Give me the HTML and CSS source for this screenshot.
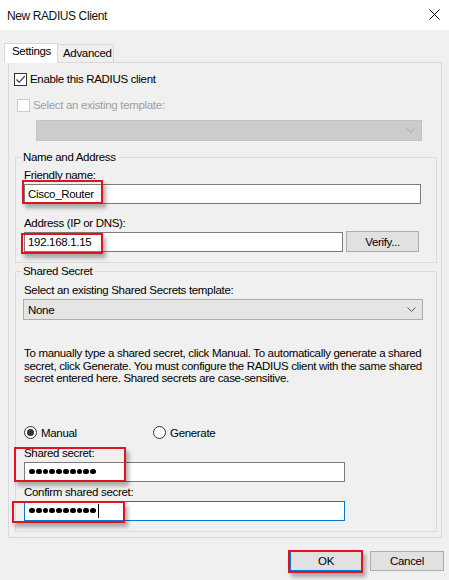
FILE: index.html
```html
<!DOCTYPE html>
<html>
<head>
<meta charset="utf-8">
<link rel="stylesheet" href="styles.css">
</head>
<body>
<div class="dialog">
  <div class="titlebar">
    <span class="title">New RADIUS Client</span>
    <svg class="close" width="11" height="11" viewBox="0 0 11 11"><path d="M0.5 0.5 L10.5 10.5 M10.5 0.5 L0.5 10.5" stroke="#000" stroke-width="1" fill="none"/></svg>
  </div>
  <div class="body">
    <div class="tabs">
      <div class="tab active">Settings</div>
      <div class="tab">Advanced</div>
    </div>
    <div class="panel">
      <div class="check-row enable">
        <span class="checkbox checked"><svg width="11" height="11" viewBox="0 0 11 11"><path d="M1.5 5.5 L4.2 8.3 L9.8 2.2" stroke="#222" stroke-width="1.1" fill="none"/></svg></span>
        <span>Enable this RADIUS client</span>
      </div>
      <div class="check-row template disabled">
        <span class="checkbox"></span>
        <span>Select an existing template:</span>
      </div>
      <div class="select disabled-select">
        <svg class="chev" width="9" height="5" viewBox="0 0 9 5"><path d="M0.5 0.5 L4.5 4.5 L8.5 0.5" stroke="#a6a6a6" fill="none"/></svg>
      </div>

      <div class="group group-name">
        <span class="legend">Name and Address</span>
        <label class="lbl first">Friendly name:</label>
        <div class="field-wrap">
          <div class="input friendly">Cisco_Router</div>
          <span class="mark mark-friendly"></span>
        </div>
        <label class="lbl addr-lbl">Address (IP or DNS):</label>
        <div class="addr-row">
          <div class="field-wrap">
            <div class="input address">192.168.1.15</div>
            <span class="mark mark-address"></span>
          </div>
          <div class="button verify">Verify...</div>
        </div>
      </div>

      <div class="group group-secret">
        <span class="legend">Shared Secret</span>
        <label class="lbl first2">Select an existing Shared Secrets template:</label>
        <div class="select none-select">
          <span>None</span>
          <svg class="chev" width="9" height="5" viewBox="0 0 9 5"><path d="M0.5 0.5 L4.5 4.5 L8.5 0.5" stroke="#555" fill="none"/></svg>
        </div>
        <p class="info">To manually type a shared secret, click Manual. To automatically generate a shared secret, click Generate. You must configure the RADIUS client with the same shared secret entered here. Shared secrets are case-sensitive.</p>
        <div class="radio-row">
          <div class="radio-item manual"><span class="radio checked"></span><span>Manual</span></div>
          <div class="radio-item"><span class="radio"></span><span>Generate</span></div>
        </div>
        <label class="lbl secret-lbl">Shared secret:</label>
        <div class="field-wrap">
          <div class="input secret"><span class="dots"><i></i><i></i><i></i><i></i><i></i><i></i><i></i><i></i><i></i><i></i></span></div>
          <span class="mark mark-secret"></span>
        </div>
        <label class="lbl confirm-lbl">Confirm shared secret:</label>
        <div class="field-wrap">
          <div class="input secret focused"><span class="dots"><i></i><i></i><i></i><i></i><i></i><i></i><i></i><i></i><i></i><i></i></span><span class="caret"></span></div>
          <span class="mark mark-confirm"></span>
        </div>
      </div>
    </div>
    <div class="footer">
      <div class="field-wrap">
        <div class="button ok">OK</div>
        <span class="mark mark-ok"></span>
      </div>
      <div class="button cancel">Cancel</div>
    </div>
  </div>
</div>
</body>
</html>
```

FILE: styles.css
```css
* { box-sizing: border-box; }
html, body { margin: 0; padding: 0; }
body {
  width: 449px;
  height: 580px;
  background: #f0f0f0;
  font-family: "Liberation Sans", Arial, sans-serif;
  font-size: 11.5px;
  letter-spacing: -0.32px;
  color: #000;
  overflow: hidden;
}
.dialog { width: 449px; height: 580px; display: flex; flex-direction: column; }
.titlebar {
  height: 30px;
  background: #fff;
  display: flex;
  align-items: center;
  justify-content: space-between;
  padding: 0 9px 0 7px;
  font-size: 12px;
}
.title { margin-top: 1px; letter-spacing: -0.4px; color: #111; }
.close { margin-top: -1px; }

.body { flex: 1; display: flex; flex-direction: column; }

.tabs {
  display: flex;
  align-items: flex-end;
  margin-top: 13px;
  padding-left: 4px;
  height: 19px;
  position: relative;
  z-index: 1;
}
.tab {
  height: 18px;
  padding: 0 5px;
  border: 1px solid #d9d9d9;
  border-bottom: none;
  line-height: 17px;
  background: #f0f0f0;
  width: 57px;
  margin-left: -1px;
}
.tab.active {
  height: 20px;
  width: 54px;
  margin-left: 0;
  background: #fff;
  padding-left: 7px;
  line-height: 15px;
  margin-bottom: -1px;
}

.panel {
  margin: 0 7px 0 8px;
  border: 1px solid #d9d9d9;
  height: 476px;
  display: flex;
  flex-direction: column;
  padding: 9px 5px 0 5px;
}

.check-row { display: flex; align-items: center; gap: 3px; height: 14px; line-height: 14px; }
.checkbox {
  width: 13px; height: 13px;
  border: 1px solid #333;
  background: #fff;
  display: flex; align-items: center; justify-content: center;
  flex: none;
}
.template { margin-top: 12px; margin-left: 3px; }
.disabled { color: #a0a0a0; }
.disabled .checkbox { border-color: #cccccc; background: #fff; }

.select {
  height: 21px;
  display: flex;
  align-items: center;
  justify-content: space-between;
  padding: 0 6px 0 4px;
}
.disabled-select {
  margin-top: 8px;
  margin-left: 22px;
  width: 386px;
  background: #cccccc;
  border: 1px solid #c4c4c4;
  justify-content: flex-end;
}

.group {
  border: 1px solid #dcdcdc;
  margin-left: 1px;
  width: 422px;
  display: flex;
  flex-direction: column;
  padding: 0 0 0 8px;
  align-items: flex-start;
}
.group-name { margin-top: 16px; padding-bottom: 10px; }
.group-secret { margin-top: 8px; padding-bottom: 10px; flex: 1; margin-bottom: 5px; }
.legend {
  margin-top: -8px;
  margin-left: -3px;
  padding: 0 2px;
  background: #f0f0f0;
  line-height: 14px;
  height: 14px;
}
.lbl { display: block; line-height: 14px; height: 14px; }
.first { margin-top: 4px; }
.addr-lbl { margin-top: 12px; }
.first2 { margin-top: 5px; }
.secret-lbl { margin-top: 6px; }
.confirm-lbl { margin-top: 3px; }

.field-wrap { position: relative; }
.input {
  height: 20px;
  border: 1px solid #7a7a7a;
  background: #fff;
  margin-top: 2px;
  padding: 0 3px;
  line-height: 18px;
  display: flex;
  align-items: center;
}
.friendly { width: 397px; }
.addr-row { display: flex; align-items: center; gap: 3px; margin-top: 1px; }
.address { width: 319px; margin-top: 0; }
.button {
  height: 21px;
  background: #e1e1e1;
  border: 1px solid #adadad;
  display: flex; align-items: center; justify-content: center;
}
.verify { width: 73px; }

.none-select {
  margin-top: 2px;
  margin-left: -1px;
  width: 400px;
  background: #e5e5e5;
  border: 1px solid #adadad;
}

.info {
  margin: 27px 0 0 0;
  line-height: 12.5px;
  width: 400px;
}
.radio-row { display: flex; align-items: center; margin-top: 41px; height: 14px; }
.radio-item { display: flex; align-items: center; gap: 4px; }
.manual { width: 129px; }
.radio {
  width: 13px; height: 13px;
  border: 1px solid #333;
  border-radius: 50%;
  background: #fff;
  display: flex; align-items: center; justify-content: center;
}
.radio.checked::after {
  content: "";
  width: 7px; height: 7px;
  border-radius: 50%;
  background: #333;
}
.secret { width: 321px; padding-left: 4px; }
.focused { border-color: #0078d7; }
.dots { display: flex; gap: 1px; }
.dots i { display: block; width: 5.8px; height: 5.8px; border-radius: 50%; background: #000; }
.caret { width: 1px; height: 14px; background: #000; margin-left: 2px; }

.mark {
  position: absolute;
  border: 2px solid #e0141e;
  box-shadow: 3px 4px 4px rgba(0,0,0,0.3);
  pointer-events: none;
}
.mark-friendly { left: -2px; top: -2px; width: 81px; height: 24px; }
.mark-address { left: -3px; top: 1px; width: 82px; height: 21px; }
.mark-secret { left: -10px; top: -13px; width: 112px; height: 35px; }
.mark-confirm { left: -12px; top: 2px; width: 113px; height: 22px; }
.mark-ok { left: -2px; top: -1px; width: 75px; height: 23px; }

.footer {
  display: flex;
  justify-content: flex-end;
  gap: 8px;
  margin-top: 13px;
  padding-right: 5px;
}
.ok { width: 72px; height: 20px; border-color: #0078d7; }
.cancel { width: 74px; height: 20px; }
```
